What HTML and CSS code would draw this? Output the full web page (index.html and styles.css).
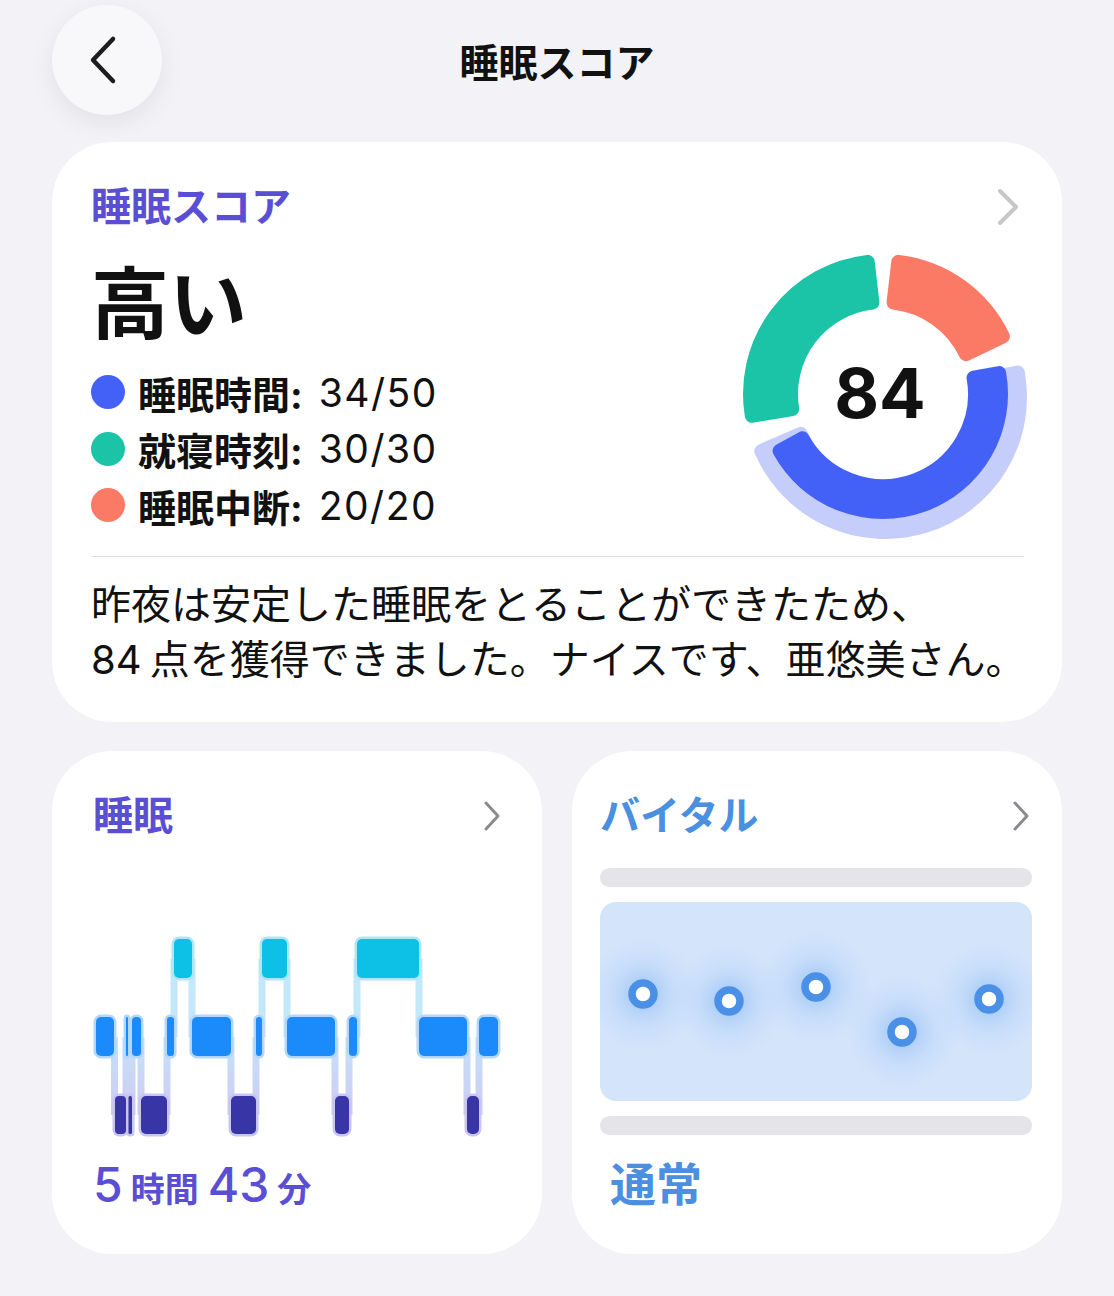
FILE: index.html
```html
<!DOCTYPE html>
<html lang="ja">
<head>
    <meta charset="UTF-8">
    <meta name="viewport" content="width=device-width, initial-scale=1.0">
    <title>睡眠スコア</title>
    <link rel="stylesheet" href="styles.css">
</head>
<body>
<div class="page">
    <header class="topbar">
        <button class="back-btn" aria-label="戻る">
            <svg width="30" height="50" viewBox="0 0 30 50"><polyline points="25,4 5,25 25,46"/></svg>
        </button>
        <h1 class="page-title">睡眠スコア</h1>
        <span></span>
    </header>

    <!-- スコア概要 -->
    <section class="card score-card">
        <div class="card-head">
            <h2 class="card-title">睡眠スコア</h2>
            <svg class="chevron chevron-light" width="24" height="40" viewBox="0 0 24 40"><polyline points="4,4 20,20 4,36"/></svg>
        </div>
        <div class="score-body">
            <div class="score-info">
                <div class="score-level">高い</div>
                <ul class="legend">
                    <li><span class="dot dot-blue"></span><b>睡眠時間:</b><span class="val">34/50</span></li>
                    <li><span class="dot dot-teal"></span><b>就寝時刻:</b><span class="val">30/30</span></li>
                    <li><span class="dot dot-coral"></span><b>睡眠中断:</b><span class="val">20/20</span></li>
                </ul>
            </div>
            <svg class="donut" width="300" height="300" viewBox="0 0 300 300">
                <path class="seg seg-halo" transform="translate(2 3)" d="M282.78 125.63 A135 135 0 0 1 26.29 204.05 L65.69 186.83 A92 92 0 0 0 240.49 133.39 Z"/>
                <path class="seg seg-blue" d="M266.14 129.10 A118 118 0 0 1 46.60 206.85 L69.38 194.32 A92 92 0 0 0 240.55 133.71 Z"/>
                <path class="seg seg-teal" d="M18.79 171.72 A133 133 0 0 1 134.71 17.88 L139.43 58.61 A92 92 0 0 0 59.24 165.03 Z"/>
                <path class="seg seg-coral" d="M165.29 17.88 A133 133 0 0 1 269.94 92.53 L232.97 110.25 A92 92 0 0 0 160.57 58.61 Z"/>
                <text class="donut-num" x="147" y="174">84</text>
            </svg>
        </div>
        <hr class="divider">
        <p class="summary">昨夜は安定した睡眠をとることができたため、<br>84 点を獲得できました。ナイスです、亜悠美さん。</p>
    </section>

    <div class="grid">
        <!-- 睡眠ステージ -->
        <section class="card sleep-card">
            <div class="card-head">
                <h2 class="card-title">睡眠</h2>
                <svg class="chevron chevron-dark" width="18" height="32" viewBox="0 0 18 32"><polyline points="3,3 15,16 3,29"/></svg>
            </div>
            <svg class="hypno" width="408" height="212" viewBox="93 930 408 212">
                <defs>
                    <linearGradient id="linkMB" x1="0" y1="0" x2="0" y2="1">
                        <stop offset="0" stop-color="#c4e2f9"/>
                        <stop offset="1" stop-color="#cfcbf1"/>
                    </linearGradient>
                </defs>
                <!-- つなぎ線 -->
                <g class="link-tm">
                    <rect x="170.5" y="960" width="7" height="78"/>
                    <rect x="188.5" y="960" width="7" height="78"/>
                    <rect x="258.5" y="960" width="7" height="78"/>
                    <rect x="283.5" y="960" width="7" height="78"/>
                    <rect x="353.5" y="960" width="7" height="78"/>
                    <rect x="415.5" y="960" width="7" height="78"/>
                </g>
                <g class="link-mb">
                    <rect x="111" y="1038" width="7" height="78"/>
                    <rect x="122.5" y="1038" width="7" height="78"/>
                    <rect x="128.5" y="1038" width="7" height="78"/>
                    <rect x="137.5" y="1038" width="7" height="78"/>
                    <rect x="163.5" y="1038" width="7" height="78"/>
                    <rect x="227.5" y="1038" width="7" height="78"/>
                    <rect x="252.5" y="1038" width="7" height="78"/>
                    <rect x="331.5" y="1038" width="7" height="78"/>
                    <rect x="345.5" y="1038" width="7" height="78"/>
                    <rect x="463.5" y="1038" width="7" height="78"/>
                    <rect x="475.5" y="1038" width="7" height="78"/>
                </g>
                <!-- ステージ -->
                <rect class="bar lvl-m" x="96" y="1018" width="18" height="39" rx="5"/>
                <rect class="bar lvl-b" x="115" y="1097" width="11" height="38" rx="4"/>
                <rect class="bar lvl-m" x="126" y="1018" width="2" height="39" rx="1"/>
                <rect class="bar lvl-b" x="128.5" y="1097" width="3.5" height="38" rx="1.5"/>
                <rect class="bar lvl-m" x="132" y="1018" width="9" height="39" rx="4"/>
                <rect class="bar lvl-b" x="141" y="1097" width="26" height="38" rx="5"/>
                <rect class="bar lvl-m" x="167" y="1018" width="7" height="39" rx="3"/>
                <rect class="bar lvl-t" x="174" y="940" width="18" height="39" rx="5"/>
                <rect class="bar lvl-m" x="192" y="1018" width="39" height="39" rx="5"/>
                <rect class="bar lvl-b" x="231" y="1097" width="25" height="38" rx="5"/>
                <rect class="bar lvl-m" x="256" y="1018" width="6" height="39" rx="3"/>
                <rect class="bar lvl-t" x="262" y="940" width="25" height="39" rx="5"/>
                <rect class="bar lvl-m" x="287" y="1018" width="48" height="39" rx="5"/>
                <rect class="bar lvl-b" x="335" y="1097" width="14" height="38" rx="5"/>
                <rect class="bar lvl-m" x="349" y="1018" width="8" height="39" rx="4"/>
                <rect class="bar lvl-t" x="357" y="940" width="62" height="39" rx="5"/>
                <rect class="bar lvl-m" x="419" y="1018" width="48" height="39" rx="5"/>
                <rect class="bar lvl-b" x="467" y="1097" width="12" height="38" rx="5"/>
                <rect class="bar lvl-m" x="479" y="1018" width="19" height="39" rx="5"/>
            </svg>
            <div class="duration"><span class="num">5</span><span class="unit">時間</span><span class="num">43</span><span class="unit">分</span></div>
        </section>

        <!-- バイタル -->
        <section class="card vital-card">
            <div class="card-head">
                <h2 class="card-title vital-title">バイタル</h2>
                <svg class="chevron chevron-dark" width="18" height="32" viewBox="0 0 18 32"><polyline points="3,3 15,16 3,29"/></svg>
            </div>
            <div class="skeleton"></div>
            <div class="vital-plot">
                <svg width="432" height="199" viewBox="0 0 432 199">
                    <defs>
                        <radialGradient id="dotGlow">
                            <stop offset="0" stop-color="#5b9cf0" stop-opacity="0.5"/>
                            <stop offset="0.5" stop-color="#7fb2f3" stop-opacity="0.18"/>
                            <stop offset="1" stop-color="#9cc4f6" stop-opacity="0"/>
                        </radialGradient>
                    </defs>
                    <circle class="glow" cx="43" cy="92" r="58"/>
                    <circle class="glow" cx="129" cy="99" r="58"/>
                    <circle class="glow" cx="216" cy="85" r="58"/>
                    <circle class="glow" cx="302" cy="130" r="58"/>
                    <circle class="glow" cx="389" cy="97" r="58"/>
                    <circle class="ring" cx="43" cy="92" r="11"/>
                    <circle class="ring" cx="129" cy="99" r="11"/>
                    <circle class="ring" cx="216" cy="85" r="11"/>
                    <circle class="ring" cx="302" cy="130" r="11"/>
                    <circle class="ring" cx="389" cy="97" r="11"/>
                </svg>
            </div>
            <div class="skeleton skeleton-low"></div>
            <div class="vital-status">通常</div>
        </section>
    </div>
</div>
</body>
</html>
```

FILE: styles.css
```css
* {
    box-sizing: border-box;
}

body {
    margin: 0;
    background-color: #f2f2f7;
    font-family: "Inter", "Noto Sans CJK JP", sans-serif;
    color: #111;
}

.page {
    padding: 4px 52px 40px;
}

/* ヘッダー */
.topbar {
    display: grid;
    grid-template-columns: 110px 1fr 110px;
    align-items: center;
    height: 111px;
    margin-bottom: 27px;
}

.back-btn {
    width: 110px;
    height: 110px;
    border: none;
    border-radius: 50%;
    background-color: #f8f8fa;
    box-shadow: 0 8px 26px rgba(0, 0, 0, 0.07);
    display: flex;
    align-items: center;
    justify-content: center;
    padding: 0 8px 0 0;
}

.back-btn polyline {
    fill: none;
    stroke: #1c1c1e;
    stroke-width: 4.5;
    stroke-linecap: round;
    stroke-linejoin: round;
}

.page-title {
    margin: 0;
    text-align: center;
    font-size: 39px;
    font-weight: 700;
}

/* カード共通 */
.card {
    background-color: #fff;
    border-radius: 60px;
}

.card-head {
    display: flex;
    justify-content: space-between;
    align-items: center;
    height: 48px;
}

.card-title {
    margin: 0;
    font-size: 40px;
    line-height: 48px;
    font-weight: 700;
    color: #5a4fd4;
}

.chevron polyline {
    fill: none;
    stroke-linecap: round;
    stroke-linejoin: round;
}

.chevron-light polyline {
    stroke: #c6c6cb;
    stroke-width: 4;
}

.chevron-dark polyline {
    stroke: #8a8a8f;
    stroke-width: 3;
}

/* スコアカード */
.score-card {
    padding: 41px 38px 35px 39px;
}

.score-card .chevron {
    margin-right: 4px;
}

.score-body {
    display: flex;
    justify-content: space-between;
    align-items: flex-start;
}

.score-level {
    margin-top: 34px;
    font-size: 78px;
    line-height: 80px;
    font-weight: 700;
}

.legend {
    list-style: none;
    margin: 19px 0 0;
    padding: 0;
}

.legend li {
    display: flex;
    align-items: center;
    height: 56.5px;
    font-size: 38px;
}

.legend b {
    font-weight: 700;
}

.legend .val {
    margin-left: 16px;
    font-size: 39px;
    letter-spacing: 1.5px;
    font-weight: 400;
}

.dot {
    flex: none;
    width: 34px;
    height: 34px;
    border-radius: 50%;
    margin-right: 13px;
}

.dot-blue {
    background-color: #4361f6;
}

.dot-teal {
    background-color: #1bc3a7;
}

.dot-coral {
    background-color: #fa7a66;
}

.donut {
    flex: none;
    margin: 13px -9px 0 0;
}

.seg {
    stroke-width: 14;
    stroke-linejoin: round;
}

.seg-halo {
    fill: #c5cdfb;
    stroke: #c5cdfb;
}

.seg-blue {
    fill: #4361f6;
    stroke: #4361f6;
}

.seg-teal {
    fill: #1bc3a7;
    stroke: #1bc3a7;
}

.seg-coral {
    fill: #fa7a66;
    stroke: #fa7a66;
}

.donut-num {
    font-family: "Inter", sans-serif;
    font-size: 69px;
    font-weight: 700;
    text-anchor: middle;
    fill: #111;
}

.divider {
    border: 0;
    height: 1px;
    background-color: #dedee2;
    margin: 12px 0 0;
}

.summary {
    margin: 20px 0 0;
    font-size: 40px;
    line-height: 55px;
    word-spacing: -3px;
    white-space: nowrap;
}

/* 下段カード */
.grid {
    display: grid;
    grid-template-columns: 1fr 1fr;
    gap: 30px;
    margin-top: 29px;
}

.sleep-card,
.vital-card {
    height: 503px;
}

.sleep-card {
    padding: 41px 41px 0;
}

.hypno {
    display: block;
    margin-top: 89px;
}

.hypno .bar {
    stroke-width: 5;
    paint-order: stroke;
}

.hypno .lvl-t {
    fill: #0dc1e6;
    stroke: #aee6f8;
}

.hypno .lvl-m {
    fill: #1b8bfb;
    stroke: #b3d6fb;
}

.hypno .lvl-b {
    fill: #3835a6;
    stroke: #c8c5f2;
}

.hypno .link-tm rect {
    fill: #c3e8f9;
}

.hypno .link-mb rect {
    fill: url(#linkMB);
}

.duration {
    margin-top: 18px;
    line-height: 52px;
    color: #5a4fd4;
    font-weight: 500;
}

.duration .num {
    font-size: 48px;
}

.duration .unit {
    font-size: 34px;
    font-weight: 700;
    margin: 0 9px 0 8px;
}

.vital-card {
    padding: 41px 30px 0 28px;
}

.vital-card .chevron {
    margin-right: 2px;
}

.vital-title {
    color: #4a8fe0;
}

.skeleton {
    height: 19px;
    border-radius: 10px;
    background-color: #e4e4e9;
    margin-top: 28px;
}

.skeleton-low {
    margin-top: 15px;
}

.vital-plot {
    margin-top: 15px;
    height: 199px;
    border-radius: 16px;
    background-color: #d4e5fb;
    overflow: hidden;
}

.vital-plot svg {
    display: block;
}

.vital-plot .glow {
    fill: url(#dotGlow);
}

.vital-plot .ring {
    fill: #fff;
    stroke: #4a90e6;
    stroke-width: 7.5;
}

.vital-status {
    margin: 23px 0 0 10px;
    font-size: 46px;
    line-height: 52px;
    font-weight: 700;
    color: #4a8fe0;
}
```
